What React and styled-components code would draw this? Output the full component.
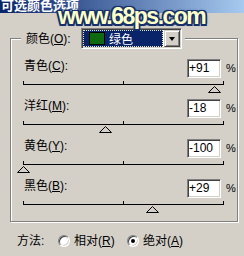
import React from "react";
import styled, { createGlobalStyle } from "styled-components";

const GlobalStyle = createGlobalStyle`
  html, body {
    margin: 0;
    padding: 0;
    background: #d4d0c8;
  }
  body {
    width: 244px;
    height: 256px;
    overflow: hidden;
  }
`;

const UI_FONT = `"Liberation Sans", "Noto Sans CJK SC", sans-serif`;

const Dialog = styled.div`
  position: relative;
  width: 244px;
  height: 256px;
  overflow: hidden;
  background: #d4d0c8;
  color: #000;
  font-family: ${UI_FONT};
  font-size: 12px;
`;

const TitleBar = styled.div`
  height: 13px;
  overflow: hidden;
  background: linear-gradient(to right, #0a246a 0%, #a6caf0 100%);
`;

const TitleText = styled.div`
  margin-top: -2px;
  padding-left: 1px;
  color: #fff;
  font-family: "Noto Sans CJK SC", sans-serif;
  font-weight: bold;
  font-size: 13px;
  line-height: 13px;
  white-space: nowrap;
`;

const Watermark = styled.div`
  position: absolute;
  left: 58px;
  top: 5px;
  font-family: "Liberation Sans", sans-serif;
  font-weight: bold;
  font-size: 23px;
  line-height: 23px;
  letter-spacing: -1.5px;
  color: #ffffc8;
  white-space: nowrap;
  text-shadow:
    1.5px 0 0 #15306a, -1.5px 0 0 #15306a, 0 1.5px 0 #15306a, 0 -1.5px 0 #15306a,
    1.5px 1.5px 0 #15306a, -1.5px 1.5px 0 #15306a, 1.5px -1.5px 0 #15306a, -1.5px -1.5px 0 #15306a,
    0 0 3px #1a2a55;
`;

const Body = styled.div`
  padding: 15px 0 0 10px;
`;

const Group = styled.fieldset`
  margin: 0;
  width: 228px;
  min-width: 0;
  box-sizing: border-box;
  padding: 10px 4px 2px 13px;
  border: 1px solid #808080;
  box-shadow: inset 1px 1px 0 #fff, 1px 1px 0 #fff;
`;

const Legend = styled.legend`
  margin-left: -3px;
  padding: 0 3px 0 5px;
  height: 21px;
  background: #d4d0c8;
`;

const LegendInner = styled.div`
  display: flex;
  align-items: center;
  height: 21px;
`;

const LegendLabel = styled.span`
  width: 55px;
  line-height: 14px;
  white-space: nowrap;
`;

const Combo = styled.div`
  display: flex;
  width: 101px;
  height: 21px;
  box-sizing: border-box;
  padding: 1px;
  border: 1px solid;
  border-color: #808080 #fff #fff #808080;
  box-shadow: inset 1px 1px 0 #404040, inset -1px -1px 0 #d4d0c8;
  background: #fff;
`;

const ComboValue = styled.div`
  display: flex;
  align-items: center;
  flex: 1;
  box-sizing: border-box;
  padding-left: 5px;
  margin-right: 1px;
  border: 1px dotted #e6e6c0;
  background: #0a246a;
  color: #fff;
  font-family: "Noto Sans CJK SC", sans-serif;
  line-height: 14px;
`;

const Swatch = styled.span`
  width: 16px;
  height: 13px;
  box-sizing: border-box;
  margin-right: 4px;
  border: 1px solid #000;
  background: ${(p) => p.$color};
`;

const ComboButton = styled.div`
  display: flex;
  align-items: center;
  justify-content: center;
  width: 16px;
  box-sizing: border-box;
  border: 1px solid;
  border-color: #d4d0c8 #404040 #404040 #d4d0c8;
  box-shadow: inset 1px 1px 0 #fff, inset -1px -1px 0 #808080;
  background: #d4d0c8;

  &::after {
    content: "";
    border-left: 3.5px solid transparent;
    border-right: 3.5px solid transparent;
    border-top: 4px solid #000;
  }
`;

const Row = styled.div`
  height: 40px;
`;

const RowTop = styled.div`
  display: flex;
  align-items: flex-start;
  height: 19px;
`;

const Label = styled.span`
  flex: 1;
  line-height: 14px;
  white-space: nowrap;
`;

const ValueBox = styled.div`
  width: 34px;
  height: 19px;
  box-sizing: border-box;
  padding-left: 1px;
  border: 1px solid;
  border-color: #808080 #fff #fff #808080;
  box-shadow: inset 1px 1px 0 #404040, inset -1px -1px 0 #d4d0c8;
  background: #fff;
  font-family: "Liberation Sans", sans-serif;
  font-size: 12px;
  line-height: 17px;
`;

const Percent = styled.span`
  width: 7px;
  margin-left: 5px;
  font-family: "Liberation Sans", sans-serif;
  font-size: 11px;
  line-height: 19px;
`;

const Track = styled.div`
  position: relative;
  margin: 6px 0 0 -1px;
  width: 201px;
  height: 10px;
  border-top: 1px solid #000;
`;

const Tick = styled.span`
  position: absolute;
  top: -4px;
  left: ${(p) => p.$at}px;
  width: 1px;
  height: 4px;
  background: #000;
`;

const Thumb = styled.svg`
  position: absolute;
  top: 1px;
  display: block;
`;

const Method = styled.div`
  display: flex;
  align-items: center;
  height: 14px;
  margin-top: 12px;
  padding-left: 7px;
`;

const MethodLabel = styled.span`
  width: 41px;
  line-height: 14px;
`;

const Option = styled.label`
  display: flex;
  align-items: center;
  width: ${(p) => p.$width}px;
  line-height: 14px;
  white-space: nowrap;
`;

const Radio = styled.span`
  position: relative;
  width: 12px;
  height: 12px;
  box-sizing: border-box;
  margin-right: 4px;
  border-radius: 50%;
  border: 1px solid;
  border-color: #808080 #fff #fff #808080;
  box-shadow: inset 1px 1px 0 #404040, inset -1px -1px 0 #d4d0c8;
  background: #fff;

  &::after {
    content: "";
    display: ${(p) => (p.$checked ? "block" : "none")};
    position: absolute;
    left: 3px;
    top: 3px;
    width: 4px;
    height: 4px;
    border-radius: 50%;
    background: #000;
  }
`;

const colorRows = [
  { name: "青色", key: "C", value: "+91", amount: 91 },
  { name: "洋红", key: "M", value: "-18", amount: -18 },
  { name: "黄色", key: "Y", value: "-100", amount: -100 },
  { name: "黑色", key: "B", value: "+29", amount: 29 },
];

function SliderRow({ row }) {
  return (
    <Row>
      <RowTop>
        <Label>
          {row.name}(<u>{row.key}</u>):
        </Label>
        <ValueBox>{row.value}</ValueBox>
        <Percent>%</Percent>
      </RowTop>
      <Track>
        <Tick $at={0} />
        <Tick $at={100} />
        <Tick $at={200} />
        <Thumb
          width="13"
          height="7"
          viewBox="0 0 13 7"
          style={{ left: row.amount + 100 - 6 }}
        >
          <polygon
            points="6.5,0.5 12.5,6.5 0.5,6.5"
            fill="#d4d0c8"
            stroke="#000"
            strokeWidth="1"
          />
        </Thumb>
      </Track>
    </Row>
  );
}

export default function App() {
  return (
    <Dialog>
      <GlobalStyle />
      <TitleBar>
        <TitleText>可选颜色选项</TitleText>
      </TitleBar>
      <Watermark>www.68ps.com</Watermark>
      <Body>
        <Group>
          <Legend>
            <LegendInner>
              <LegendLabel>
                颜色(<u>O</u>):
              </LegendLabel>
              <Combo>
                <ComboValue>
                  <Swatch $color="#0e6a0e" />
                  绿色
                </ComboValue>
                <ComboButton />
              </Combo>
            </LegendInner>
          </Legend>
          {colorRows.map((row) => (
            <SliderRow key={row.key} row={row} />
          ))}
        </Group>
        <Method>
          <MethodLabel>方法:</MethodLabel>
          <Option $width={69}>
            <Radio />
            相对(<u>R</u>)
          </Option>
          <Option $width={70}>
            <Radio $checked />
            绝对(<u>A</u>)
          </Option>
        </Method>
      </Body>
    </Dialog>
  );
}
